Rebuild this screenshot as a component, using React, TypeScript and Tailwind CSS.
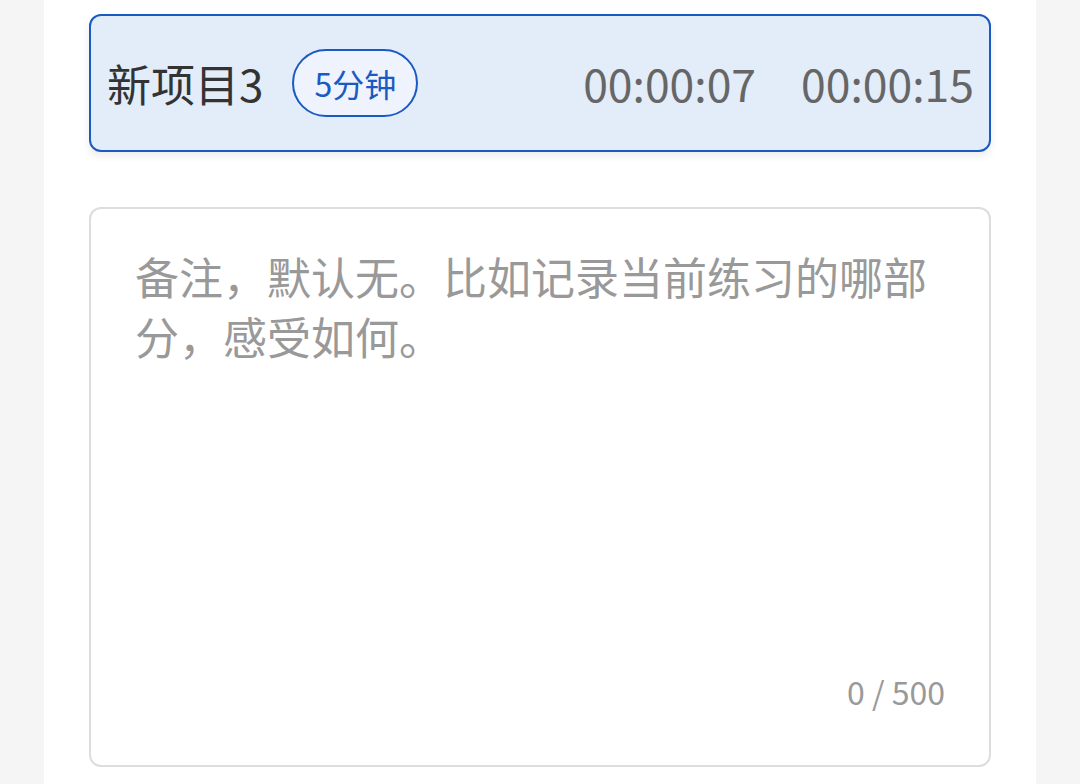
export default function App() {
  return (
    <div
      className="min-h-screen w-full bg-[#f5f5f5] flex justify-center"
      style={{ fontFamily: '"Noto Sans CJK SC", "Noto Sans", sans-serif' }}
    >
      <div className="w-[992px] bg-white px-[45px] pt-[14px] pb-[16px] flex flex-col">
        {/* current item */}
        <div className="h-[138px] flex items-center rounded-[12px] border-2 border-[#1a5ac2] bg-[#e3ecf9] pl-[16px] pr-[15px] shadow-[0_4px_8px_rgba(0,0,0,0.08)]">
          <span className="text-[44px] leading-none text-[#333333]">新项目3</span>
          <span className="ml-[29px] h-[68px] px-[20px] flex items-center rounded-full border-2 border-[#1a5ac2] bg-[#eef3fd] text-[32px] leading-none text-[#1a5ac2]">
            5分钟
          </span>
          <div className="ml-auto flex items-center gap-[45px] text-[44.5px] leading-none text-[#666666]">
            <span>00:00:07</span>
            <span>00:00:15</span>
          </div>
        </div>

        {/* note */}
        <div className="mt-[55px] h-[560px] flex flex-col rounded-[12px] border-2 border-[#dddddd] bg-white px-[44px] pt-[37px] pb-[50px]">
          <textarea
            className="flex-1 w-full resize-none overflow-hidden bg-transparent outline-none text-[44px] leading-[60px] text-[#333333] placeholder:text-[#999999]"
            placeholder="备注，默认无。比如记录当前练习的哪部分，感受如何。"
            maxLength={500}
          />
          <div className="text-right text-[32px] leading-[48px] text-[#999999]">0 / 500</div>
        </div>
      </div>
    </div>
  );
}
